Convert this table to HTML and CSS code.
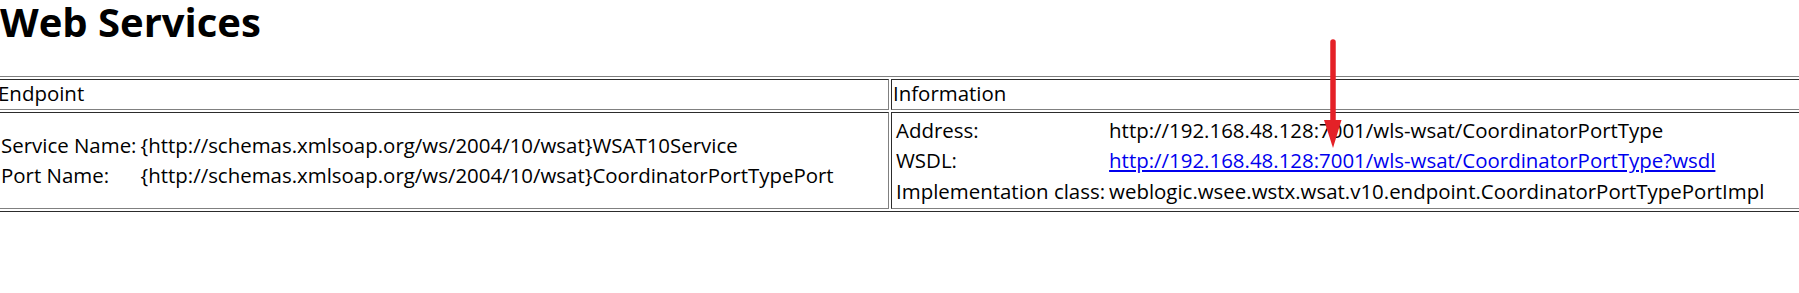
FILE: index.html
```html
<!DOCTYPE html>
<html>
<head>
<meta charset="utf-8">
<title>Web Services</title>
<link rel="stylesheet" href="styles.css">
</head>
<body>
<h1 class="title">Web Services</h1>
<table class="grid">
  <tr>
    <td class="head c1">Endpoint</td>
    <td class="head">Information</td>
  </tr>
  <tr>
    <td class="c1">
      <table class="kv">
        <tr><td>Service Name:</td><td>{http://schemas.xmlsoap.org/ws/2004/10/wsat}WSAT10Service</td></tr>
        <tr><td>Port Name:</td><td>{http://schemas.xmlsoap.org/ws/2004/10/wsat}CoordinatorPortTypePort</td></tr>
      </table>
    </td>
    <td>
      <table class="kv">
        <tr><td>Address:</td><td>http://192.168.48.128:7001/wls-wsat/CoordinatorPortType</td></tr>
        <tr><td>WSDL:</td><td><a class="link" href="#">http://192.168.48.128:7001/wls-wsat/CoordinatorPortType?wsdl</a></td></tr>
        <tr><td>Implementation class:</td><td>weblogic.wsee.wstx.wsat.v10.endpoint.CoordinatorPortTypePortImpl</td></tr>
      </table>
    </td>
  </tr>
</table>
<svg class="arrow" width="26" height="118" viewBox="0 0 26 118">
  <line x1="13" y1="8" x2="13" y2="90" stroke="#e42127" stroke-width="5.5" stroke-linecap="round"/>
  <polygon points="4,86 21.5,86 13,114" fill="#e42127"/>
</svg>
</body>
</html>
```
FILE: styles.css
```css
html {
  overflow: hidden;
  background: #ffffff;
}
body {
  margin: 0;
  font-family: "Open Sans", "Liberation Sans", sans-serif;
  font-size: 20.45px;
  line-height: 26.6px;
  color: #000000;
  position: relative;
}
.title {
  font-size: 40px;
  line-height: 44px;
  font-weight: 700;
  margin: 0 0 32px 0;
}
.grid {
  width: 1840px;
  margin-left: -7px;
  border: 1px outset gray;
  border-spacing: 2px;
  border-collapse: separate;
}
.grid > tbody > tr > td {
  border: 1px inset gray;
  padding: 1px;
  vertical-align: middle;
  text-align: left;
}
.grid > tbody > tr > td.head {
  padding: 0 1px 2px 1px;
}
.grid > tbody > tr > td.c1 {
  width: 889px;
}
.kv {
  border: none;
  border-spacing: 2px;
  border-collapse: separate;
}
.kv td {
  padding: 1px;
  white-space: nowrap;
  vertical-align: middle;
}
.link {
  color: #0000ee;
  text-decoration: underline;
}
.arrow {
  position: absolute;
  left: 1320px;
  top: 34px;
}
```
